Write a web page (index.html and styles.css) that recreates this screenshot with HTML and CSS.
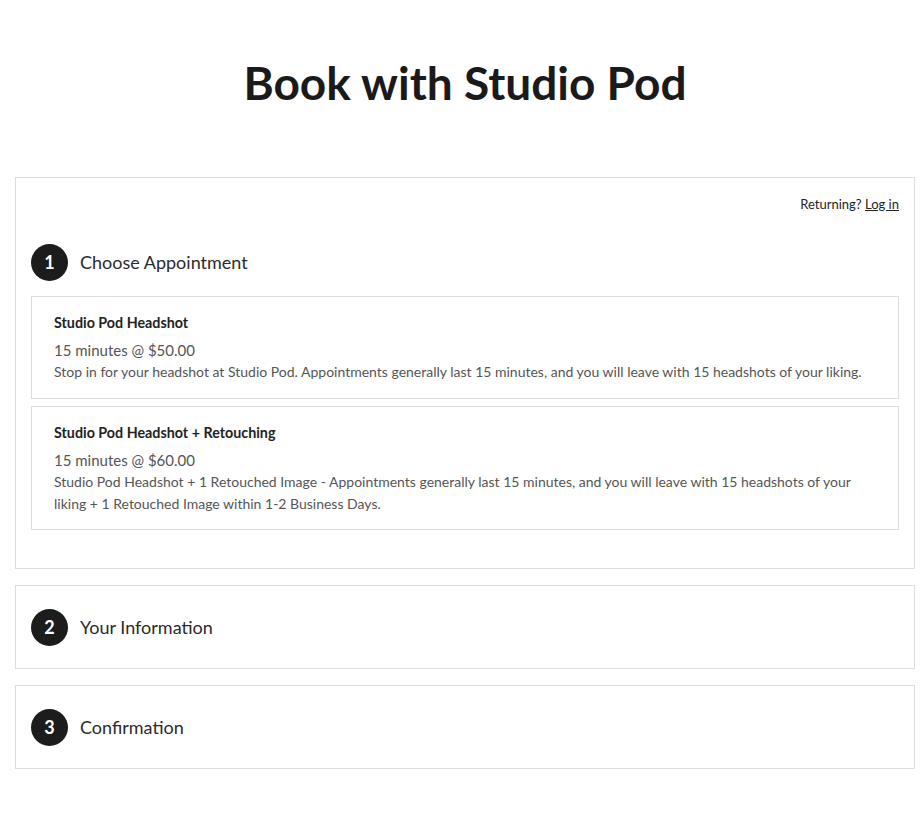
FILE: index.html
```html
<!DOCTYPE html>
<html>
<head>
<meta charset="utf-8">
<link rel="stylesheet" href="styles.css">
</head>
<body>
<h1 class="title">Book with Studio Pod</h1>
<div class="steps">
  <section class="panel panel-active">
    <div class="returning">Returning? <a href="#">Log in</a></div>
    <div class="step-head">
      <span class="num">1</span>
      <h2 class="step-title">Choose Appointment</h2>
    </div>
    <div class="cards">
      <div class="card">
        <div class="card-name">Studio Pod Headshot</div>
        <div class="card-price">15 minutes @ $50.00</div>
        <div class="card-desc">Stop in for your headshot at Studio Pod. Appointments generally last 15 minutes, and you will leave with 15 headshots of your liking.</div>
      </div>
      <div class="card">
        <div class="card-name">Studio Pod Headshot + Retouching</div>
        <div class="card-price">15 minutes @ $60.00</div>
        <div class="card-desc">Studio Pod Headshot + 1 Retouched Image - Appointments generally last 15 minutes, and you will leave with 15 headshots of your liking + 1 Retouched Image within 1-2 Business Days.</div>
      </div>
    </div>
  </section>
  <section class="panel">
    <div class="step-head">
      <span class="num">2</span>
      <h2 class="step-title">Your Information</h2>
    </div>
  </section>
  <section class="panel">
    <div class="step-head">
      <span class="num">3</span>
      <h2 class="step-title">Confirmation</h2>
    </div>
  </section>
</div>
</body>
</html>
```
FILE: styles.css
```css
html, body {
  margin: 0;
  padding: 0;
  background: #fff;
}
body {
  font-family: "Lato", "Noto Sans", sans-serif;
  color: #333;
  padding: 0 6px 0 15px;
}
.title {
  margin: 0;
  padding-top: 58px;
  height: 177px;
  box-sizing: border-box;
  text-align: center;
  font-size: 46px;
  font-weight: 700;
  color: #1a1a1a;
  line-height: 50px;
  letter-spacing: 0;
}
.steps {
  display: flex;
  flex-direction: column;
  gap: 16px;
}
.panel {
  border: 1px solid #dedede;
  padding: 0 15px;
}
.panel-active {
  padding-top: 16px;
  padding-bottom: 38px;
}
.returning {
  text-align: right;
  font-size: 13px;
  color: #222;
  height: 20px;
  line-height: 20px;
}
.returning a {
  color: #222;
  text-decoration: underline;
}
.step-head {
  display: flex;
  align-items: center;
  gap: 12px;
  height: 82px;
}
.panel-active .step-head {
  height: 64px;
  margin-top: 16px;
  margin-bottom: 2px;
}
.num {
  width: 37px;
  height: 37px;
  border-radius: 50%;
  background: #1c1c1c;
  color: #fff;
  font-weight: 700;
  font-size: 18px;
  display: flex;
  align-items: center;
  justify-content: center;
  flex: none;
}
.step-title {
  margin: 0;
  font-size: 18px;
  font-weight: 400;
  color: #2b2b2b;
}
.cards {
  display: flex;
  flex-direction: column;
  gap: 7px;
}
.card {
  border: 1px solid #dedede;
  padding: 16px 22px 15px;
  color: #555;
}
.card + .card {
  padding-bottom: 14px;
}
.card-name {
  font-weight: 700;
  font-size: 14.3px;
  color: #222;
  line-height: 20px;
  margin-bottom: 6px;
}
.card-price {
  font-size: 15px;
  line-height: 22px;
}
.card-desc {
  font-size: 14px;
  line-height: 22px;
}
```
